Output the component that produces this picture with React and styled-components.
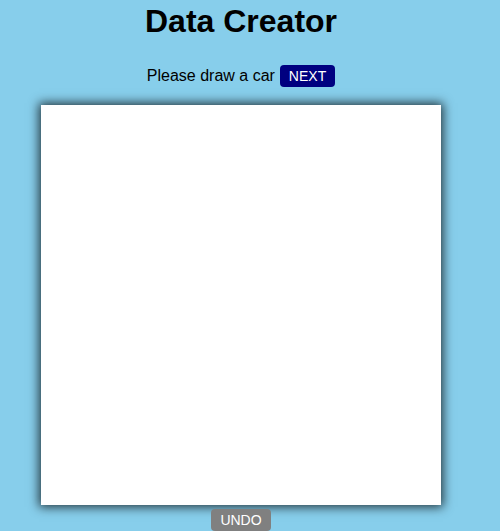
import styled, { createGlobalStyle } from 'styled-components'

const Global = createGlobalStyle`
    body {
        margin: 0;
        background: #87ceeb;
        font-family: "Liberation Sans", Arial, sans-serif;
    }
`;

export default function App() {
    return <Page>
        <Global />
        <Title>Data Creator</Title>
        <Prompt>
            Please draw a car
            <Button $bg="#000080">NEXT</Button>
        </Prompt>
        <Canvas />
        <Button $bg="#808080" $top="4px">UNDO</Button>
    </Page>;
}

const Page = styled.div`
    width: 482px;
    display: flex;
    flex-direction: column;
    align-items: center;
    padding-bottom: 20px;
`;
const Title = styled.h1`
    font-size: 32px;
    line-height: 37px;
    font-weight: bold;
    margin: 3px 0 0;
    color: #000;
`;
const Prompt = styled.div`
    display: flex;
    align-items: center;
    gap: 5px;
    margin-top: 25px;
    font-size: 16px;
    color: #000;
`;
const Button = styled.button`
    font-family: "Liberation Sans", Arial, sans-serif;
    font-size: 14px;
    height: 22px;
    padding: 0 9px;
    margin-top: ${p => p.$top || '0'};
    border: none;
    border-radius: 4px;
    background: ${p => p.$bg};
    color: #fff;
`;
const Canvas = styled.div`
    width: 400px;
    height: 400px;
    margin-top: 18px;
    background: #fff;
    box-shadow: 0 0 10px 2px rgba(0, 0, 0, 0.75);
`;
